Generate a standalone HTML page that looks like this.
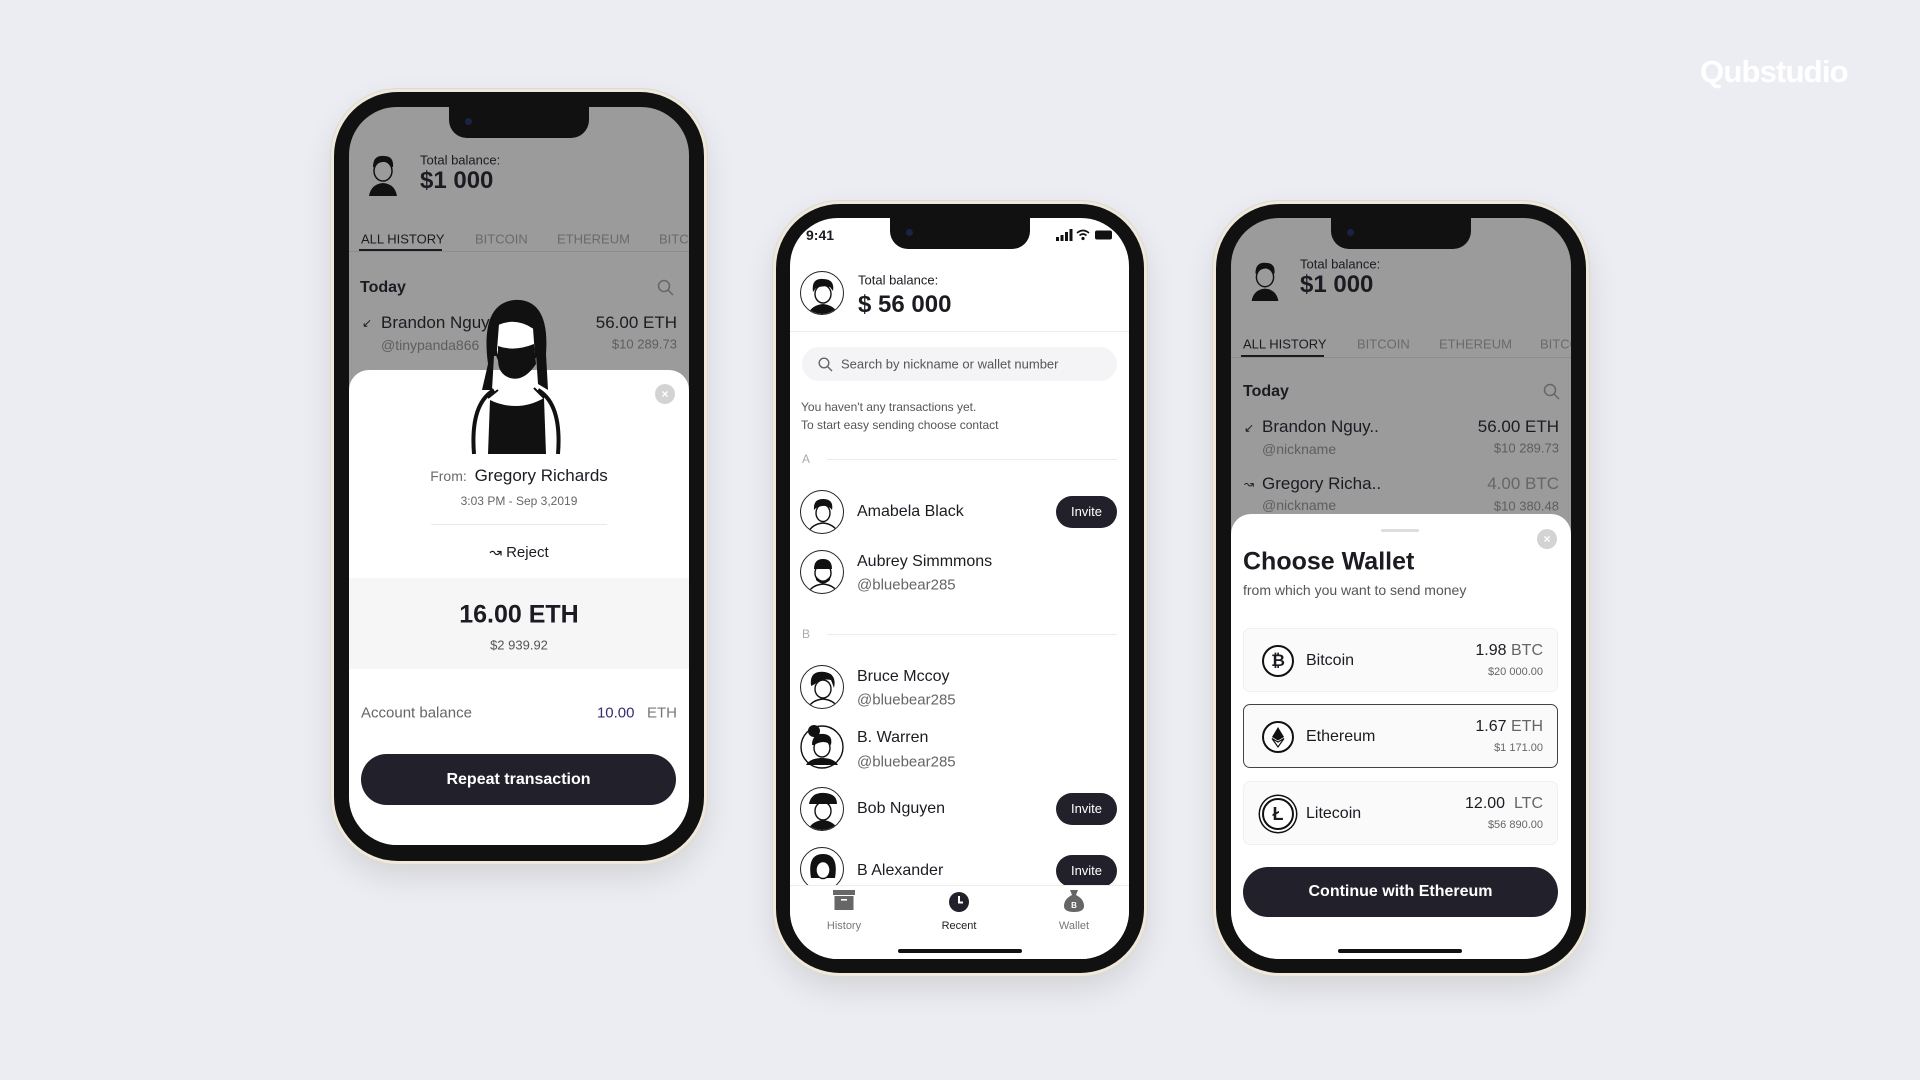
<!DOCTYPE html>
<html><head><meta charset="utf-8">
<style>
*{margin:0;padding:0;box-sizing:border-box}
body{width:1920px;height:1080px;background:#ecedf2;position:relative;overflow:hidden;font-family:"Liberation Sans",sans-serif;color:#1c1b22}
.a{position:absolute;white-space:nowrap}
.phone{position:absolute;border-radius:64px;background:#111;box-shadow:0 0 0 3px #efe8dd,0 0 0 4px #e0d9cd,0 14px 34px rgba(0,0,0,.12)}
.btn{position:absolute;background:#efe8dd;width:4px;border-radius:2px}
.screen{position:absolute;overflow:hidden;border-radius:48px;background:#fff}
.notch{position:absolute;top:0;width:140px;height:31px;background:#111;border-radius:0 0 18px 18px}
.notch i{position:absolute;left:16px;top:11px;width:7px;height:7px;border-radius:50%;background:#1b2340}
.c{transform:translateY(-50%)}
.r{text-align:right}
.av{position:absolute;width:44px;height:44px;border-radius:50%;border:1.5px solid #222;background:#fff;overflow:hidden}
.inv{position:absolute;left:266px;width:61px;height:32px;border-radius:16px;background:#22212b;color:#fff;font-size:13px;text-align:center;line-height:32px}
.card{position:absolute;left:12px;width:315px;height:64px;border-radius:7px;background:#fafafa;border:1px solid #f0f0f0}
.coin{position:absolute;left:18px;top:16px;width:32px;height:32px;border-radius:50%;border:2px solid #111;background:#fff}
.pill{position:absolute;left:12px;width:315px;height:51px;border-radius:26px;background:#22212b;color:#fff;font-weight:bold;font-size:16px;text-align:center;line-height:51px}
</style></head><body>

<div class="a" style="left:1700px;top:54px;font-size:31px;font-weight:bold;color:#fff;letter-spacing:-0.8px">Qubstudio</div>

<!-- PHONE 1 -->
<div class="btn" style="left:330px;top:250px;height:36px"></div>
<div class="btn" style="left:330px;top:300px;height:62px"></div>
<div class="btn" style="left:330px;top:372px;height:62px"></div>
<div class="btn" style="left:704px;top:320px;height:90px"></div>
<div class="phone" style="left:334px;top:92px;width:370px;height:769px"></div>
<div class="screen" style="left:349px;top:107px;width:340px;height:738px;background:#9b9b9b">
  <div class="notch" style="left:100px"><i></i></div>
  <svg class="a" style="left:18px;top:46px" width="32" height="44" viewBox="0 0 32 44"><path d="M6 14 Q6 2 17 3 Q27 3 26 14 L24 14 Q22 8 15 9 Q9 10 8 15Z" fill="#111"/><ellipse cx="16" cy="18" rx="9" ry="10" fill="none" stroke="#111" stroke-width="1.5"/><path d="M2 43 Q4 31 16 30 Q28 31 30 43Z" fill="#111"/></svg>
  <div class="a c" style="left:71px;top:53px;font-size:13px">Total balance:</div>
  <div class="a c" style="left:71px;top:74px;font-size:24px;font-weight:bold">$1 000</div>
  <div class="a c" style="left:12px;top:132px;font-size:13px">ALL HISTORY</div>
  <div class="a c" style="left:126px;top:132px;font-size:13px;color:#6a6a6a">BITCOIN</div>
  <div class="a c" style="left:208px;top:132px;font-size:13px;color:#6a6a6a">ETHEREUM</div>
  <div class="a c" style="left:310px;top:132px;font-size:13px;color:#6a6a6a">BITCOIN</div>
  <div class="a" style="left:0;top:144px;width:340px;height:1px;background:#8c8c8c"></div>
  <div class="a" style="left:10px;top:142px;width:83px;height:2px;background:#1c1b22"></div>
  <div class="a c" style="left:11px;top:181px;font-size:16px;font-weight:bold">Today</div>
  <svg class="a" style="left:308px;top:172px" width="18" height="18" viewBox="0 0 18 18"><circle cx="7" cy="7" r="5.5" fill="none" stroke="#666" stroke-width="1.5"/><path d="M11 11L16 16" stroke="#666" stroke-width="1.5"/></svg>
  <div class="a c" style="left:13px;top:216px;font-size:12px">↙</div>
  <div class="a c" style="left:32px;top:216px;font-size:17px">Brandon Nguyen</div>
  <div class="a c" style="left:32px;top:238px;font-size:14px;color:#5e5e5e">@tinypanda866</div>
  <div class="a c r" style="right:12px;top:216px;font-size:17px">56.00 ETH</div>
  <div class="a c r" style="right:12px;top:237px;font-size:13px;color:#5e5e5e">$10 289.73</div>
  <div class="a" style="left:0;top:263px;width:340px;height:475px;background:#fff;border-radius:20px 20px 0 0"></div>
  <svg class="a" style="left:105px;top:187px" width="124" height="162" viewBox="0 0 124 162"><path d="M34 70 Q26 10 60 6 Q96 4 92 60 L94 96 L84 90 L82 60 L40 62 L38 96 L28 96Z" fill="#111"/><path d="M44 30 Q62 22 80 34 L82 62 Q70 78 58 76 Q44 72 42 56Z" fill="#fff" stroke="#111" stroke-width="2"/><path d="M44 52 Q60 58 80 50 L82 70 Q70 88 56 84 Q44 80 44 66Z" fill="#111"/><path d="M20 160 Q16 110 40 96 M104 160 Q108 110 84 96" fill="none" stroke="#111" stroke-width="4"/><path d="M34 160 L36 106 Q48 112 62 112 Q76 112 90 104 L92 160Z" fill="#111"/><path d="M44 96 L34 104 M80 94 L90 104" stroke="#111" stroke-width="2"/></svg>
  <div class="a" style="left:306px;top:277px;width:20px;height:20px;border-radius:50%;background:#d3d3d3;color:#fff;font-size:12px;text-align:center;line-height:20px;font-weight:bold">×</div>
  <div class="a c" style="left:0;width:340px;text-align:center;top:369px;font-size:17px"><span style="font-size:14px;color:#6a6a6a">From:&nbsp; </span>Gregory Richards</div>
  <div class="a c" style="left:0;width:340px;text-align:center;top:394px;font-size:12px;color:#666">3:03 PM - Sep 3,2019</div>
  <div class="a" style="left:82px;top:417px;width:176px;height:1px;background:#e8e8e8"></div>
  <div class="a c" style="left:0;width:340px;text-align:center;top:445px;font-size:15px">↝ Reject</div>
  <div class="a" style="left:0;top:471px;width:340px;height:91px;background:#f6f6f6"></div>
  <div class="a c" style="left:0;width:340px;text-align:center;top:508px;font-size:25px;font-weight:bold">16.00 ETH</div>
  <div class="a c" style="left:0;width:340px;text-align:center;top:538px;font-size:13px;color:#555">$2 939.92</div>
  <div class="a c" style="left:12px;top:606px;font-size:15px;color:#666">Account balance</div>
  <div class="a c r" style="right:12px;top:606px;font-size:15px;color:#777"><span style="color:#3a2a72">10.00</span>&nbsp;&nbsp; ETH</div>
  <div class="pill" style="top:647px">Repeat transaction</div>
</div>

<!-- PHONE 2 -->
<div class="btn" style="left:772px;top:360px;height:36px"></div>
<div class="btn" style="left:772px;top:410px;height:62px"></div>
<div class="btn" style="left:772px;top:482px;height:62px"></div>
<div class="btn" style="left:1144px;top:430px;height:90px"></div>
<div class="phone" style="left:776px;top:204px;width:368px;height:769px"></div>
<div class="screen" style="left:790px;top:218px;width:339px;height:741px">
  <div class="notch" style="left:100px"><i></i></div>
  <div class="a c" style="left:16px;top:17px;font-size:14px;font-weight:bold">9:41</div>
  <svg class="a" style="left:266px;top:11px" width="58" height="12" viewBox="0 0 58 12"><rect x="0" y="8" width="3" height="4" fill="#111"/><rect x="4.5" y="6" width="3" height="6" fill="#111"/><rect x="9" y="3" width="3" height="9" fill="#111"/><rect x="13.5" y="0" width="3" height="12" fill="#111"/><path d="M21 4 Q27 -1 33 4 M23.5 6.5 Q27 3.5 30.5 6.5" fill="none" stroke="#111" stroke-width="1.6"/><circle cx="27" cy="9.5" r="1.6" fill="#111"/><rect x="39" y="1.5" width="17" height="9" rx="2" fill="#111"/></svg>
  <div class="av" style="left:10px;top:53px"><svg width="44" height="44" viewBox="0 0 44 44"><path d="M12 20 Q10 6 22 7 Q34 7 32 19 L29 15 Q22 13 15 16Z" fill="#111"/><ellipse cx="22" cy="22" rx="8" ry="9" fill="none" stroke="#111" stroke-width="1.4"/><path d="M6 44 Q10 33 22 32 Q34 33 38 44Z" fill="#111"/></svg></div>
  <div class="a c" style="left:68px;top:62px;font-size:13px">Total balance:</div>
  <div class="a c" style="left:68px;top:87px;font-size:24px;font-weight:bold">$ 56 000</div>
  <div class="a" style="left:0;top:113px;width:339px;height:1px;background:#ececec"></div>
  <div class="a" style="left:12px;top:129px;width:315px;height:34px;border-radius:17px;background:#f4f4f6"></div>
  <svg class="a" style="left:28px;top:139px" width="15" height="15" viewBox="0 0 15 15"><circle cx="6" cy="6" r="4.8" fill="none" stroke="#666" stroke-width="1.4"/><path d="M9.5 9.5L14 14" stroke="#666" stroke-width="1.4"/></svg>
  <div class="a c" style="left:51px;top:146px;font-size:13px;color:#555">Search by nickname or wallet number</div>
  <div class="a c" style="left:11px;top:189px;font-size:12px;color:#555">You haven't any transactions yet.</div>
  <div class="a c" style="left:11px;top:207px;font-size:12px;color:#555">To start easy sending choose contact</div>
  <div class="a c" style="left:12px;top:241px;font-size:12px;color:#aaa">A</div>
  <div class="a" style="left:37px;top:241px;width:290px;height:1px;background:#ececec"></div>
  <div class="a c" style="left:12px;top:416px;font-size:12px;color:#aaa">B</div>
  <div class="a" style="left:37px;top:416px;width:290px;height:1px;background:#ececec"></div>

  <div class="av" style="left:10px;top:272px"><svg width="44" height="44" viewBox="0 0 44 44"><path d="M13 19 Q12 8 22 8 Q33 8 31 19 Q26 12 15 17Z" fill="#111"/><ellipse cx="22" cy="22" rx="7" ry="8.5" fill="none" stroke="#111" stroke-width="1.4"/><path d="M6 44 Q10 33 22 32 Q34 33 38 44" fill="none" stroke="#111" stroke-width="1.4"/></svg></div>
  <div class="a c" style="left:67px;top:294px;font-size:16px">Amabela Black</div>
  <div class="inv" style="top:278px">Invite</div>

  <div class="av" style="left:10px;top:332px"><svg width="44" height="44" viewBox="0 0 44 44"><path d="M13 18 Q13 8 22 8 Q31 8 31 18Z" fill="#111"/><ellipse cx="22" cy="22" rx="8" ry="9" fill="none" stroke="#111" stroke-width="1.4"/><path d="M15 25 Q22 34 29 25 L29 29 Q22 36 15 29Z" fill="#111"/><path d="M6 44 Q10 34 22 33 Q34 34 38 44" fill="none" stroke="#111" stroke-width="1.4"/></svg></div>
  <div class="a c" style="left:67px;top:344px;font-size:16px">Aubrey Simmmons</div>
  <div class="a c" style="left:67px;top:367px;font-size:15px;color:#666">@bluebear285</div>

  <div class="av" style="left:10px;top:447px"><svg width="44" height="44" viewBox="0 0 44 44"><path d="M10 20 Q8 4 24 6 Q36 8 33 22 L30 14 Q20 12 14 18Z" fill="#111"/><ellipse cx="22" cy="23" rx="8" ry="9" fill="none" stroke="#111" stroke-width="1.4"/><path d="M6 44 Q10 34 22 33 Q34 34 38 44" fill="none" stroke="#111" stroke-width="1.4"/></svg></div>
  <div class="a c" style="left:67px;top:459px;font-size:16px">Bruce Mccoy</div>
  <div class="a c" style="left:67px;top:482px;font-size:15px;color:#666">@bluebear285</div>

  <div class="av" style="left:10px;top:507px;border:none;overflow:visible"><svg width="44" height="44" viewBox="0 0 44 44"><circle cx="22" cy="22" r="21" fill="none" stroke="#111" stroke-width="1.4"/><circle cx="14" cy="6" r="6" fill="#111"/><path d="M12 20 Q12 8 24 9 Q33 10 31 20 Q24 14 14 20Z" fill="#111"/><ellipse cx="22" cy="23" rx="8" ry="9" fill="none" stroke="#111" stroke-width="1.4"/><path d="M6 40 Q10 33 22 33 Q34 33 38 40Z" fill="#111"/></svg></div>
  <div class="a c" style="left:67px;top:520px;font-size:16px">B. Warren</div>
  <div class="a c" style="left:67px;top:544px;font-size:15px;color:#666">@bluebear285</div>

  <div class="av" style="left:10px;top:569px"><svg width="44" height="44" viewBox="0 0 44 44"><path d="M8 16 Q10 4 24 5 Q36 6 36 16Z" fill="#111"/><ellipse cx="22" cy="23" rx="8" ry="9" fill="none" stroke="#111" stroke-width="1.4"/><path d="M6 44 Q10 33 22 32 Q34 33 38 44Z" fill="#111"/></svg></div>
  <div class="a c" style="left:67px;top:591px;font-size:16px">Bob Nguyen</div>
  <div class="inv" style="top:575px">Invite</div>

  <div class="av" style="left:10px;top:629px"><svg width="44" height="44" viewBox="0 0 44 44"><path d="M10 30 Q6 6 22 6 Q38 6 34 30Z" fill="#111"/><ellipse cx="22" cy="22" rx="7" ry="8.5" fill="#fff" stroke="#111" stroke-width="1.4"/></svg></div>
  <div class="a c" style="left:67px;top:653px;font-size:16px">B Alexander</div>
  <div class="inv" style="top:637px">Invite</div>

  <div class="a" style="left:0;top:667px;width:339px;height:74px;background:#fff;border-top:1px solid #ececec"></div>
  <svg class="a" style="left:43px;top:672px" width="22" height="20" viewBox="0 0 22 20"><rect x="0" y="0" width="22" height="5" fill="#666"/><rect x="1.5" y="6" width="19" height="14" fill="#666"/><rect x="8" y="9" width="6" height="1.6" fill="#fff"/></svg>
  <div class="a c" style="left:24px;width:60px;text-align:center;top:708px;font-size:11px;color:#777">History</div>
  <svg class="a" style="left:159px;top:674px" width="20" height="20" viewBox="0 0 20 20"><circle cx="10" cy="10" r="10" fill="#22212b"/><path d="M10 4V10.5H14" fill="none" stroke="#fff" stroke-width="2"/></svg>
  <div class="a c" style="left:139px;width:60px;text-align:center;top:708px;font-size:11px;color:#222">Recent</div>
  <svg class="a" style="left:274px;top:672px" width="20" height="22" viewBox="0 0 20 22"><path d="M6 0 L14 0 L12 5 Q20 9 20 16 Q20 22 10 22 Q0 22 0 16 Q0 9 8 5Z" fill="#666"/><text x="10" y="18" font-size="8" fill="#fff" text-anchor="middle" font-family="Liberation Sans" font-weight="bold">B</text></svg>
  <div class="a c" style="left:254px;width:60px;text-align:center;top:708px;font-size:11px;color:#777">Wallet</div>
  <div class="a" style="left:108px;top:731px;width:124px;height:4px;border-radius:2px;background:#111"></div>
</div>

<!-- PHONE 3 -->
<div class="btn" style="left:1212px;top:360px;height:36px"></div>
<div class="btn" style="left:1212px;top:410px;height:62px"></div>
<div class="btn" style="left:1212px;top:482px;height:62px"></div>
<div class="btn" style="left:1586px;top:430px;height:90px"></div>
<div class="phone" style="left:1216px;top:204px;width:370px;height:769px"></div>
<div class="screen" style="left:1231px;top:218px;width:340px;height:741px;background:#9b9b9b">
  <div class="notch" style="left:100px"><i></i></div>
  <svg class="a" style="left:18px;top:42px" width="32" height="42" viewBox="0 0 32 44"><path d="M6 14 Q6 2 17 3 Q27 3 26 14 L24 14 Q22 8 15 9 Q9 10 8 15Z" fill="#111"/><ellipse cx="16" cy="18" rx="9" ry="10" fill="none" stroke="#111" stroke-width="1.5"/><path d="M2 43 Q4 31 16 30 Q28 31 30 43Z" fill="#111"/></svg>
  <div class="a c" style="left:69px;top:46px;font-size:13px">Total balance:</div>
  <div class="a c" style="left:69px;top:67px;font-size:24px;font-weight:bold">$1 000</div>
  <div class="a c" style="left:12px;top:126px;font-size:13px">ALL HISTORY</div>
  <div class="a c" style="left:126px;top:126px;font-size:13px;color:#6a6a6a">BITCOIN</div>
  <div class="a c" style="left:208px;top:126px;font-size:13px;color:#6a6a6a">ETHEREUM</div>
  <div class="a c" style="left:309px;top:126px;font-size:13px;color:#6a6a6a">BITCOIN</div>
  <div class="a" style="left:0;top:139px;width:340px;height:1px;background:#8c8c8c"></div>
  <div class="a" style="left:10px;top:137px;width:83px;height:2px;background:#1c1b22"></div>
  <div class="a c" style="left:12px;top:174px;font-size:16px;font-weight:bold">Today</div>
  <svg class="a" style="left:312px;top:165px" width="18" height="18" viewBox="0 0 18 18"><circle cx="7" cy="7" r="5.5" fill="none" stroke="#666" stroke-width="1.5"/><path d="M11 11L16 16" stroke="#666" stroke-width="1.5"/></svg>
  <div class="a c" style="left:13px;top:210px;font-size:12px">↙</div>
  <div class="a c" style="left:31px;top:209px;font-size:17px">Brandon Nguy..</div>
  <div class="a c" style="left:31px;top:231px;font-size:14px;color:#5e5e5e">@nickname</div>
  <div class="a c r" style="right:12px;top:209px;font-size:17px">56.00 ETH</div>
  <div class="a c r" style="right:12px;top:230px;font-size:13px;color:#5e5e5e">$10 289.73</div>
  <div class="a c" style="left:13px;top:266px;font-size:12px">↝</div>
  <div class="a c" style="left:31px;top:266px;font-size:17px">Gregory Richa..</div>
  <div class="a c" style="left:31px;top:287px;font-size:14px;color:#5e5e5e">@nickname</div>
  <div class="a c r" style="right:12px;top:266px;font-size:17px;color:#666">4.00 BTC</div>
  <div class="a c r" style="right:12px;top:288px;font-size:13px;color:#5e5e5e">$10 380.48</div>
  <div class="a" style="left:0;top:296px;width:340px;height:445px;background:#fff;border-radius:20px 20px 0 0"></div>
  <div class="a" style="left:150px;top:311px;width:38px;height:3px;border-radius:2px;background:#ddd"></div>
  <div class="a" style="left:306px;top:311px;width:20px;height:20px;border-radius:50%;background:#d3d3d3;color:#fff;font-size:12px;text-align:center;line-height:20px;font-weight:bold">×</div>
  <div class="a c" style="left:12px;top:344px;font-size:25px;font-weight:bold">Choose Wallet</div>
  <div class="a c" style="left:12px;top:372px;font-size:14px;color:#555">from which you want to send money</div>

  <div class="card" style="top:410px"><div class="coin"><div style="font-weight:bold;font-size:17px;text-align:center;line-height:28px">₿</div></div>
    <div class="a c" style="left:62px;top:32px;font-size:16px">Bitcoin</div>
    <div class="a c r" style="right:14px;top:22px;font-size:16px">1.98 <span style="color:#666">BTC</span></div>
    <div class="a c r" style="right:14px;top:43px;font-size:11px;color:#666">$20 000.00</div></div>
  <div class="card" style="top:486px;border:1.5px solid #444;background:#fafafa"><div class="coin"><svg width="28" height="28" viewBox="0 0 28 28"><path d="M14 4 L20 14 L14 17.5 L8 14Z" fill="#111"/><path d="M8 15.5 L14 19 L20 15.5 L14 24Z" fill="none" stroke="#111" stroke-width="1.2"/></svg></div>
    <div class="a c" style="left:62px;top:32px;font-size:16px">Ethereum</div>
    <div class="a c r" style="right:14px;top:22px;font-size:16px">1.67 <span style="color:#666">ETH</span></div>
    <div class="a c r" style="right:14px;top:43px;font-size:11px;color:#666">$1 171.00</div></div>
  <div class="card" style="top:563px"><div class="coin" style="box-shadow:0 0 0 2px #fff,0 0 0 3.5px #111"><div style="font-weight:bold;font-size:18px;text-align:center;line-height:28px">Ł</div></div>
    <div class="a c" style="left:62px;top:32px;font-size:16px">Litecoin</div>
    <div class="a c r" style="right:14px;top:22px;font-size:16px">12.00&nbsp; <span style="color:#666">LTC</span></div>
    <div class="a c r" style="right:14px;top:43px;font-size:11px;color:#666">$56 890.00</div></div>

  <div class="pill" style="top:649px;height:50px;line-height:50px">Continue with Ethereum</div>
  <div class="a" style="left:107px;top:731px;width:124px;height:4px;border-radius:2px;background:#111"></div>
</div>
</body></html>
